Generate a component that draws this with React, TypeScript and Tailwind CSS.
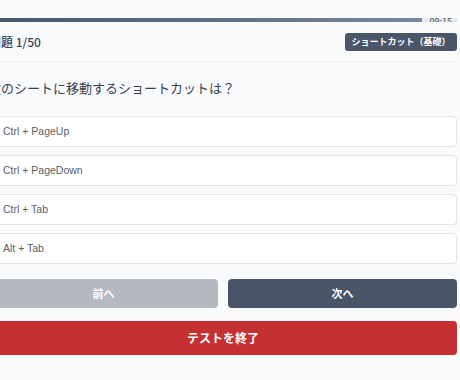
import React from 'react';

const options = ['Ctrl + PageUp', 'Ctrl + PageDown', 'Ctrl + Tab', 'Alt + Tab'];

export default function App() {
  return (
    <div className="min-h-screen overflow-hidden bg-[#f9fafb] font-['Noto_Sans_CJK_JP',sans-serif]">
      <div className="-ml-[11px] w-[468px] pt-[18px]">
        {/* progress */}
        <div className="relative h-[4px] bg-[#e2e8f0]">
          <div className="h-full w-[433px] bg-gradient-to-r from-[#4a5568] to-[#7a8699]" />
          <span className="absolute right-[5px] top-[-1px] text-[9px] leading-none text-[#4a5568]">09:15</span>
        </div>

        <div className="relative z-10 flex h-[40px] items-center justify-between border-b border-[#eceef1] bg-[#f9fafb]">
          <span className="text-[12px] font-medium text-[#374151]">問題 1/50</span>
          <button className="h-[18px] w-[112px] rounded-[3px] bg-[#4a5568] text-[9px] font-bold leading-none text-white">
            ショートカット（基礎）
          </button>
        </div>

        <p className="-ml-[1px] mt-[16px] text-[13px] leading-[20px] text-[#374151]">次のシートに移動するショートカットは？</p>

        <div className="mt-[18px] flex flex-col gap-[8px]">
          {options.map(o => (
            <div
              key={o}
              className="flex h-[31px] items-center rounded-[4px] border border-[#e3e5e8] bg-white px-[13px] font-['Liberation_Sans',Arial,sans-serif] text-[10.5px] text-[#5a6068]"
            >
              {o}
            </div>
          ))}
        </div>

        <div className="mt-[15px] grid grid-cols-2 gap-[10px]">
          <button className="h-[29px] rounded-[4px] bg-[#b5bac2] text-[11px] font-semibold text-white">前へ</button>
          <button className="h-[29px] rounded-[4px] bg-[#4a5568] text-[11px] font-semibold text-white">次へ</button>
        </div>

        <button className="mt-[13px] h-[34px] w-full rounded-[4px] bg-[#c53032] text-[12px] font-bold text-white">
          テストを終了
        </button>
      </div>
    </div>
  );
}
